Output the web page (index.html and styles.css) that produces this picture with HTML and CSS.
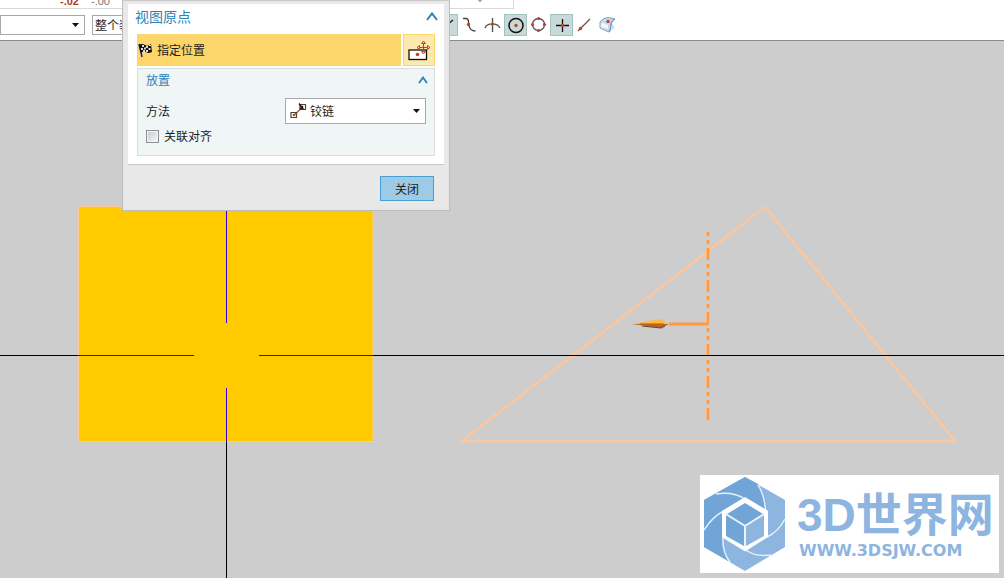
FILE: index.html
```html
<!DOCTYPE html>
<html lang="zh-CN">
<head>
<meta charset="utf-8">
<title>视图原点</title>
<link rel="stylesheet" href="styles.css">
</head>
<body>
<div class="app">
  <header class="toolbars">
    <div class="ribbon">
      <span class="decimal decimal-red">-.02</span>
      <span class="decimal">-.00</span>
      <svg class="ribbon-mark" width="4" height="2" viewBox="0 0 4 2"><path d="M0 0h4v1H3v1H1V1H0z" fill="#8cb8ae"/></svg>
    </div>
    <div class="snapbar">
      <div class="field filter">
        <select aria-label="类型过滤器"><option></option></select>
        <svg class="arrow" width="7" height="4" viewBox="0 0 7 4"><path d="M0 0h7L3.500 4z" fill="#111"/></svg>
      </div>
      <div class="field scope">
        <select aria-label="选择范围"><option>整个装配</option></select>
      </div>
      <div class="snaps">
        <button class="snap on" aria-label="端点"><svg width="21" height="20" viewBox="0 0 21 20"><path d="M4 16L17 5" stroke="#222" stroke-width="1.500"/></svg></button>
        <button class="snap" aria-label="控制点"><svg width="21" height="20" viewBox="0 0 21 20"><path d="M4 3.500h3c3.500 0 2 4 3 7 .5 3.500 2 5.500 6.500 5.500" fill="none" stroke="#444" stroke-width="1.400"/><circle cx="9.500" cy="9.500" r="1.700" fill="#c8401c"/></svg></button>
        <button class="snap" aria-label="交点"><svg width="21" height="20" viewBox="0 0 21 20"><path d="M10.500 3v14M3 13c2-5.500 12-5.500 15 0" fill="none" stroke="#555" stroke-width="1.400"/><circle cx="10.500" cy="9" r="1.600" fill="#c8401c"/></svg></button>
        <button class="snap on" aria-label="圆心"><svg width="21" height="20" viewBox="0 0 21 20"><circle cx="11" cy="10.500" r="7" fill="none" stroke="#111" stroke-width="1.500"/><circle cx="11" cy="10.500" r="1.700" fill="#c8401c"/></svg></button>
        <button class="snap" aria-label="象限点"><svg width="21" height="20" viewBox="0 0 21 20"><circle cx="10.500" cy="9.500" r="6" fill="none" stroke="#556" stroke-width="1.400"/><g fill="#c8401c"><circle cx="10.500" cy="3.500" r="1.600"/><circle cx="10.500" cy="15.500" r="1.600"/><circle cx="4.500" cy="9.500" r="1.600"/><circle cx="16.500" cy="9.500" r="1.600"/></g></svg></button>
        <button class="snap on" aria-label="现有点"><svg width="21" height="20" viewBox="0 0 21 20"><path d="M11.500 4v13M5 10.500h13" stroke="#111" stroke-width="1.300"/><circle cx="11.500" cy="10.500" r="1.700" fill="#c8401c"/></svg></button>
        <button class="snap" aria-label="曲线上的点"><svg width="21" height="20" viewBox="0 0 21 20"><path d="M4 16L16 4" stroke="#654" stroke-width="1.300"/><circle cx="6.500" cy="13.500" r="1.700" fill="#c8401c"/></svg></button>
        <button class="snap" aria-label="面上的点"><svg width="21" height="20" viewBox="0 0 21 20"><path d="M3 7q2-4 8-4.500l7 1.500q-3 2-3 5l3 4q-3-1-4 3.500l-2 .5-8-4q-1-3-1-6z" fill="#c5daf0"/><path d="M3 7q2-4 8-4.500l7 1.500M3 7v6l9 4" fill="none" stroke="#8a9cb4"/><path d="M18 4q-4 2-4 6t-2 7" fill="none" stroke="#6d93ca" stroke-width="1.300"/><path d="M4 8q4 0 7 2v4l-7-2z" fill="#eef6fd"/><path d="M14 11l4 2-4 2z" fill="#d8dce0"/><circle cx="11" cy="6.500" r="1.700" fill="#c8401c"/></svg></button>
      </div>
    </div>
  </header>

  <main class="canvas">
    <svg class="drawing" width="100%" height="100%" role="img" aria-label="工程图视图">
      <g transform="translate(0 -41)">
        <rect x="78.500" y="206.500" width="294.500" height="235" fill="#ffca00" stroke="#ffc8a0"/>
        <g shape-rendering="crispEdges">
          <path d="M0 355.500H78M226.500 442V3000" stroke="#000"/>
          <path d="M78 355.500H194M259 355.500H373M226.500 207V323M226.500 388V442" stroke="#3a00c8"/>
        </g>
        <path d="M462 441L765 207L955 441Z" fill="none" stroke="#fdc69c" stroke-width="2.500"/>
        <path d="M708 232V420" stroke="#ffb87a" stroke-width="4" stroke-dasharray="4 4 4 4 12 4"/>
        <path d="M708 232V420" stroke="#ff9b3c" stroke-width="2" stroke-dasharray="4 4 4 4 12 4"/>
        <path d="M373 355.500H6000" stroke="#000" shape-rendering="crispEdges"/>
        <path d="M669 324H708.500" stroke="#ff9b3c" stroke-width="3"/>
        <path d="M632 324L660 319L669 324L661 328Z" fill="#ffb940"/>
        <path d="M632 324H669L661 328Z" fill="#ba6424"/>
        <path d="M642 326L661 328L665 326" fill="none" stroke="#5e4630"/>
        <path d="M640 323.500H664" stroke="#f27d20"/>
      </g>
    </svg>

    <div class="watermark">
      <svg width="82" height="94" viewBox="0 0 82 94">
        <path d="M41 0L81 23V70L41 94L0 70V23Z" fill="#8db5df"/>
        <path d="M41 0L54 7Q62 17 63 35L41 22L23 32Q10 40 0 54V23Z" fill="#71a5d8"/>
        <path d="M0 54Q8 39 20 34L19 60Q19 76 26 85L0 70Z" fill="#71a5d8"/>
        <path d="M54 8Q64 22 62 60M63 60Q74 55 81 42M62 60L42 73Q51 80 67 78M42 74L19 60Q18 75 26 85M20 60V34Q9 39 0 53M20 34L41 22Q29 14 12 17M41 22L63 34" fill="none" stroke="#e5f0fb" stroke-width="1.500"/>
        <path d="M41 20L64 34V60L41 74L18 60V34Z" fill="#fff"/>
        <path d="M41 26L59 37L41 48L23 37Z" fill="#71a5d8"/>
        <path d="M22 38L40 49V69L22 59Z" fill="#71a5d8"/>
        <path d="M60 38L42 49V69L60 59Z" fill="#8db5df"/>
        <path d="M22 37L41 49L60 37M41 49V70" fill="none" stroke="#e5f0fb" stroke-width="1.500"/>
      </svg>
      <div class="brand">
        <strong class="brand-name">3D世界网</strong>
        <span class="brand-url">WWW.3DSJW.COM</span>
      </div>
    </div>
  </main>

  <section class="dialog" aria-label="视图原点">
    <div class="panel">
      <button class="section-head title"><span>视图原点</span>
        <svg width="12" height="9" viewBox="0 0 12 9"><path d="M1 8L6 1.500L11 8" fill="none" stroke="#2b82b8" stroke-width="2"/></svg>
      </button>
      <div class="panel-body">
        <div class="pick">
          <button class="pick-label">
            <svg width="14" height="15" viewBox="0 0 14 15"><path d="M1 1l3 13" stroke="#22207c" stroke-width="1.500"/><path d="M1 2q3-2 6 0t6-1l1 8q-4 2-6 0t-5 1z" fill="#111"/><path d="M4 2h2v2H4zM8 3h2v2H8zM6 4.500h2v2H6zM10.500 5h2v2h-2zM3 5h2v2H3zM8 7h2v2H8zM5 7h2v2H5zM11 2h2v1h-2z" fill="#ddd"/></svg>
            <span>指定位置</span>
          </button>
          <button class="pick-tool" aria-label="位置对话框">
            <svg width="24" height="22" viewBox="0 0 24 22"><rect x="2" y="11" width="17.500" height="9.500" fill="#fff" stroke="#111" stroke-width="1.300"/><path d="M16.500 3v11M11 8.500h11" stroke="#c8401c" stroke-width="1.200"/><path d="M14.500 4.500l2-2.500 2 2.500zM14.500 12.500l2 2.500 2-2.500zM12.500 6.500l-2.500 2 2.500 2zM20.500 6.500l2.500 2-2.500 2z" fill="#fbe9a8" stroke="#c8401c"/><circle cx="10.500" cy="15.500" r="1.800" fill="#c8401c"/></svg>
          </button>
        </div>
        <div class="group">
          <button class="section-head"><span>放置</span>
            <svg width="10" height="8" viewBox="0 0 10 8"><path d="M1 7L5 1.500L9 7" fill="none" stroke="#2b82b8" stroke-width="1.800"/></svg>
          </button>
          <div class="method">
            <label for="method">方法</label>
            <div class="field">
              <svg width="17" height="16" viewBox="0 0 17 16"><path d="M4 12L13 4" stroke="#c8401c" stroke-width="1.300"/><path d="M1 9.500h5.500v5H1zM10 1.500h5.500v5H10z" fill="none" stroke="#543" stroke-width="1.200"/><circle cx="4" cy="12" r="1.300" fill="#c8401c"/><path d="M9 .500l4.500 6M10 6l3-3" stroke="#111" stroke-width="1.300"/></svg>
              <select id="method"><option>铰链</option></select>
              <svg class="arrow" width="7" height="4" viewBox="0 0 7 4"><path d="M0 0h7L3.500 4z" fill="#111"/></svg>
            </div>
          </div>
          <label class="check"><input type="checkbox"><span>关联对齐</span></label>
        </div>
      </div>
    </div>
    <div class="actions"><button class="close">关闭</button></div>
  </section>
</div>
</body>
</html>
```
FILE: styles.css
```css
* {
  box-sizing: border-box;
}

body {
  margin: 0;
  color: #1c1c1c;
  font: 12px/18px "Noto Sans CJK SC", sans-serif;
}

button,
select,
input {
  margin: 0;
  padding: 0;
  border: 0;
  border-radius: 0;
  background: none;
  color: inherit;
  font: inherit;
}

svg {
  display: block;
  flex: none;
}

.app {
  position: relative;
  display: flex;
  flex-direction: column;
  min-height: 100vh;
  overflow: hidden;
}

.toolbars {
  background: #fff;
  border-bottom: 1px solid #858c8c;
}

.ribbon {
  display: flex;
  gap: 11px;
  width: 514px;
  height: 9px;
  padding-left: 60px;
  overflow: hidden;
  border-right: 1px solid #dadada;
  border-bottom: 1px solid #dadada;
}

.decimal {
  flex: none;
  width: 20px;
  margin-top: -8px;
  color: #777;
  font: 11px/18px "Liberation Sans", sans-serif;
}

.decimal-red {
  color: #b03a1c;
  font-weight: bold;
}

.ribbon-mark {
  margin-left: 356px;
}

.snapbar {
  display: flex;
  align-items: center;
  height: 31px;
  padding-top: 1px;
}

.field {
  display: flex;
  align-items: center;
  border: 1px solid #a9a9a9;
  background: #fff;
}

.field select {
  flex: 1;
  min-width: 0;
  appearance: none;
}

.arrow {
  margin-right: 5px;
  pointer-events: none;
}

.filter {
  width: 85px;
  height: 20px;
  margin-right: 7px;
}

.scope {
  width: 335px;
  height: 20px;
  margin-right: 8px;
  padding-left: 2px;
}

.snaps {
  display: flex;
}

.snap {
  width: 23px;
  height: 22px;
  border: 1px solid transparent;
}

.snap.on {
  border-color: #a3c3bd;
  background: #c7d9d9;
}

.canvas {
  position: relative;
  display: flex;
  flex: 1;
  background: #cdcdcd;
}

.drawing {
  position: absolute;
  inset: 0;
}

.watermark {
  position: absolute;
  right: 5px;
  bottom: 5px;
  display: flex;
  gap: 11px;
  padding: 2px 4px;
  background: #fff;
  color: #8db5df;
}

.brand {
  display: flex;
  flex-direction: column;
  gap: 4px;
  width: 198px;
  padding-top: 14px;
  white-space: nowrap;
}

.brand-name {
  font: bold 46px/48px "Liberation Sans", "Noto Sans CJK SC", sans-serif;
}

.brand-url {
  padding-left: 2px;
  font: bold 16px/16px "DejaVu Sans", sans-serif;
}

.dialog {
  position: absolute;
  top: 0;
  left: 122px;
  width: 328px;
  padding: 3px 5px 9px;
  border: 1px solid #bdbdbd;
  border-top-color: #cacaca;
  background: #e8e8e8;
}

.panel {
  padding: 4px 9px 8px 7px;
  border-bottom: 1px solid #c8c8c8;
  background: #fff;
}

.section-head {
  display: flex;
  align-items: center;
  justify-content: space-between;
  width: 100%;
  padding-right: 6px;
  color: #2b82b8;
}

.title {
  height: 18px;
  padding-right: 0;
  padding-bottom: 2px;
  font-size: 14px;
}

.title svg {
  margin-right: -3px;
}

.panel-body {
  padding: 8px 0 0 2px;
}

.pick {
  display: flex;
  gap: 2px;
  margin-bottom: 2px;
}

.pick-label {
  display: flex;
  flex: 1;
  align-items: center;
  gap: 5px;
  height: 32px;
  padding-left: 1px;
  background: #fcd56b;
}

.pick-tool {
  display: grid;
  place-items: center;
  width: 32px;
  height: 32px;
  border: 1px solid #fcd56b;
  background: #fbe9ae;
}

.group {
  height: 88px;
  padding: 2px 0 0 8px;
  border: 1px solid #dadddd;
  background: #f0f5f6;
}

.method {
  display: flex;
  align-items: center;
  justify-content: space-between;
  margin-top: 9px;
  padding-right: 8px;
}

.method .field {
  width: 141px;
  height: 26px;
  padding-left: 4px;
}

.method select {
  padding-left: 3px;
}

.check {
  display: flex;
  align-items: center;
  gap: 5px;
  margin-top: 3px;
}

.check input {
  width: 13px;
  height: 13px;
  appearance: none;
  border: 1px solid #8c9090;
  background: linear-gradient(135deg, #c8c8cc, #fafafa);
  box-shadow: inset 0 0 0 1px #f4f4f4;
}

.check input:checked {
  background: #2b82b8;
}

.actions {
  display: flex;
  justify-content: flex-end;
  padding: 11px 10px 0 0;
}

.close {
  width: 54px;
  height: 25px;
  border: 1px solid #479fd3;
  background: #9dcbe6;
}
```
